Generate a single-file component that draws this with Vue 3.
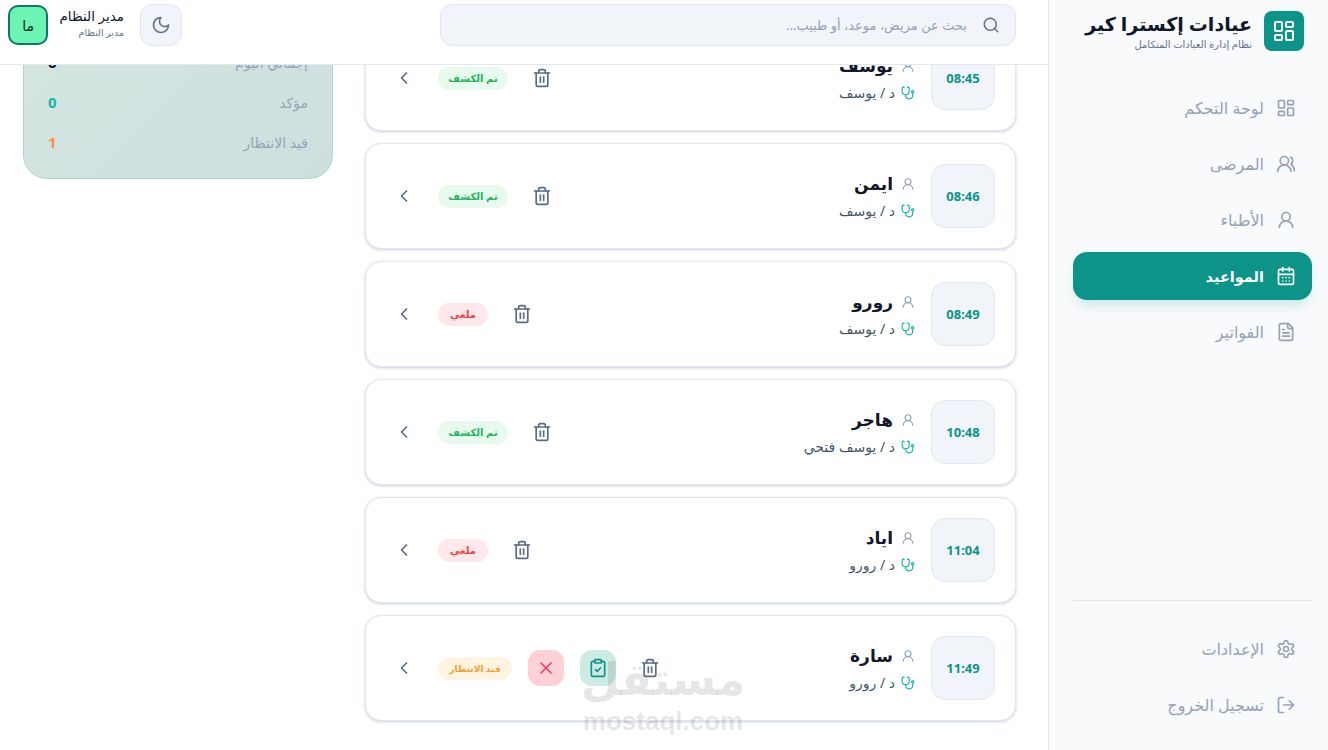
<script setup>
import { h } from "vue";

// lucide style icons, everything as paths
const icons = {
  dashboard: ["M4 3h5a1 1 0 0 1 1 1v7a1 1 0 0 1-1 1H4a1 1 0 0 1-1-1V4a1 1 0 0 1 1-1Z", "M15 3h5a1 1 0 0 1 1 1v3a1 1 0 0 1-1 1h-5a1 1 0 0 1-1-1V4a1 1 0 0 1 1-1Z", "M15 12h5a1 1 0 0 1 1 1v7a1 1 0 0 1-1 1h-5a1 1 0 0 1-1-1v-7a1 1 0 0 1 1-1Z", "M4 16h5a1 1 0 0 1 1 1v3a1 1 0 0 1-1 1H4a1 1 0 0 1-1-1v-3a1 1 0 0 1 1-1Z"],
  users: ["M18 21a8 8 0 0 0-16 0", "M15 8a5 5 0 1 1-10 0 5 5 0 0 1 10 0Z", "M22 20c0-3.37-2-6.5-4-8a5 5 0 0 0-.45-8.3"],
  user: ["M20 21a8 8 0 0 0-16 0", "M17 8a5 5 0 1 1-10 0 5 5 0 0 1 10 0Z"],
  calendar: ["M8 2v4", "M16 2v4", "M5 4h14a2 2 0 0 1 2 2v14a2 2 0 0 1-2 2H5a2 2 0 0 1-2-2V6a2 2 0 0 1 2-2Z", "M3 10h18", "M8 14h.01", "M12 14h.01", "M16 14h.01", "M8 18h.01", "M12 18h.01", "M16 18h.01"],
  file: ["M15 2H6a2 2 0 0 0-2 2v16a2 2 0 0 0 2 2h12a2 2 0 0 0 2-2V7Z", "M14 2v4a2 2 0 0 0 2 2h4", "M10 9H8", "M16 13H8", "M16 17H8"],
  settings: ["M12.22 2h-.44a2 2 0 0 0-2 2v.18a2 2 0 0 1-1 1.73l-.43.25a2 2 0 0 1-2 0l-.15-.08a2 2 0 0 0-2.73.73l-.22.38a2 2 0 0 0 .73 2.73l.15.1a2 2 0 0 1 1 1.72v.51a2 2 0 0 1-1 1.74l-.15.09a2 2 0 0 0-.73 2.73l.22.38a2 2 0 0 0 2.73.73l.15-.08a2 2 0 0 1 2 0l.43.25a2 2 0 0 1 1 1.73V20a2 2 0 0 0 2 2h.44a2 2 0 0 0 2-2v-.18a2 2 0 0 1 1-1.73l.43-.25a2 2 0 0 1 2 0l.15.08a2 2 0 0 0 2.73-.73l.22-.39a2 2 0 0 0-.73-2.73l-.15-.08a2 2 0 0 1-1-1.74v-.5a2 2 0 0 1 1-1.74l.15-.09a2 2 0 0 0 .73-2.73l-.22-.38a2 2 0 0 0-2.73-.73l-.15.08a2 2 0 0 1-2 0l-.43-.25a2 2 0 0 1-1-1.73V4a2 2 0 0 0-2-2Z", "M15 12a3 3 0 1 1-6 0 3 3 0 0 1 6 0Z"],
  logout: ["M9 21H5a2 2 0 0 1-2-2V5a2 2 0 0 1 2-2h4", "m16 17 5-5-5-5", "M21 12H9"],
  moon: ["M12 3a6 6 0 0 0 9 9 9 9 0 1 1-9-9Z"],
  search: ["M19 11a8 8 0 1 1-16 0 8 8 0 0 1 16 0Z", "m21 21-4.3-4.3"],
  trash: ["M3 6h18", "M19 6v14c0 1-1 2-2 2H7c-1 0-2-1-2-2V6", "M8 6V4c0-1 1-2 2-2h4c1 0 2 1 2 2v2", "M10 11v6", "M14 11v6"],
  chevron: ["m15 18-6-6 6-6"],
  x: ["M18 6 6 18", "m6 6 12 12"],
  clipboard: ["M9 2h6a1 1 0 0 1 1 1v2a1 1 0 0 1-1 1H9a1 1 0 0 1-1-1V3a1 1 0 0 1 1-1Z", "M16 4h2a2 2 0 0 1 2 2v14a2 2 0 0 1-2 2H6a2 2 0 0 1-2-2V6a2 2 0 0 1 2-2h2", "m9 14 2 2 4-4"],
  stethoscope: ["M4.8 2.3A.3.3 0 1 0 5 2H4a2 2 0 0 0-2 2v5a6 6 0 0 0 6 6 6 6 0 0 0 6-6V4a2 2 0 0 0-2-2h-1a.2.2 0 1 0 .3.3", "M8 15v1a6 6 0 0 0 6 6 6 6 0 0 0 6-6v-4", "M22 10a2 2 0 1 1-4 0 2 2 0 0 1 4 0Z"],
};

const Icon = (props) =>
  h(
    "svg",
    {
      width: props.size || 20,
      height: props.size || 20,
      viewBox: "0 0 24 24",
      fill: "none",
      stroke: "currentColor",
      "stroke-width": props.sw || 2,
      "stroke-linecap": "round",
      "stroke-linejoin": "round",
    },
    icons[props.name].map((d) => h("path", { d }))
  );
Icon.props = ["name", "size", "sw"];

const navTop = [
  { label: "لوحة التحكم", icon: "dashboard" },
  { label: "المرضى", icon: "users" },
  { label: "الأطباء", icon: "user" },
  { label: "المواعيد", icon: "calendar", active: true },
  { label: "الفواتير", icon: "file" },
];
const navBottom = [
  { label: "الإعدادات", icon: "settings" },
  { label: "تسجيل الخروج", icon: "logout" },
];

const statusText = { done: "تم الكشف", cancelled: "ملغي", waiting: "قيد الانتظار" };

const appointments = [
  { time: "08:45", name: "يوسف", doctor: "د / يوسف", status: "done" },
  { time: "08:46", name: "ايمن", doctor: "د / يوسف", status: "done" },
  { time: "08:49", name: "رورو", doctor: "د / يوسف", status: "cancelled" },
  { time: "10:48", name: "هاجر", doctor: "د / يوسف فتحي", status: "done" },
  { time: "11:04", name: "اياد", doctor: "د / رورو", status: "cancelled" },
  { time: "11:49", name: "سارة", doctor: "د / رورو", status: "waiting" },
];

const stats = [
  { label: "إجمالي اليوم", value: 6, cls: "dark" },
  { label: "مؤكد", value: 0, cls: "teal" },
  { label: "قيد الانتظار", value: 1, cls: "orange" },
];
</script>

<template>
  <div class="app" dir="rtl">
    <aside class="sidebar">
      <div class="brand">
        <div class="logo"><Icon name="dashboard" :size="24" /></div>
        <div>
          <div class="brand-title">عيادات إكسترا كير</div>
          <div class="brand-sub">نظام إدارة العيادات المتكامل</div>
        </div>
      </div>
      <nav class="nav">
        <a v-for="item in navTop" :key="item.label" class="nav-item" :class="{ active: item.active }">
          <Icon :name="item.icon" />
          <span>{{ item.label }}</span>
        </a>
      </nav>
      <nav class="nav nav-bottom">
        <a v-for="item in navBottom" :key="item.label" class="nav-item">
          <Icon :name="item.icon" />
          <span>{{ item.label }}</span>
        </a>
      </nav>
    </aside>

    <main class="main">
      <header class="topbar">
        <div class="search">
          <Icon name="search" :size="18" class="search-icon" />
          <span>بحث عن مريض، موعد، أو طبيب...</span>
        </div>
        <div class="top-left">
          <button class="theme-btn"><Icon name="moon" /></button>
          <div class="who">
            <div class="who-name">مدير النظام</div>
            <div class="who-role">مدير النظام</div>
          </div>
          <div class="avatar">ما</div>
        </div>
      </header>

      <!-- the page is scrolled down a bit in the shot -->
      <div class="content">
        <section class="list">
          <article v-for="a in appointments" :key="a.time" class="card">
            <div class="time">{{ a.time }}</div>
            <div class="info">
              <div class="patient">
                <Icon name="user" :size="14" class="patient-icon" />
                <span>{{ a.name }}</span>
              </div>
              <div class="doctor">
                <Icon name="stethoscope" :size="14" class="doctor-icon" />
                <span>{{ a.doctor }}</span>
              </div>
            </div>
            <div class="actions">
              <button class="icon-btn"><Icon name="trash" /></button>
              <template v-if="a.status === 'waiting'">
                <button class="icon-btn confirm"><Icon name="clipboard" /></button>
                <button class="icon-btn cancel"><Icon name="x" /></button>
              </template>
              <span class="badge" :class="a.status">{{ statusText[a.status] }}</span>
              <button class="icon-btn"><Icon name="chevron" /></button>
            </div>
          </article>
        </section>

        <aside class="summary">
          <div v-for="s in stats" :key="s.label" class="stat">
            <span class="stat-label">{{ s.label }}</span>
            <span class="stat-value" :class="s.cls">{{ s.value }}</span>
          </div>
        </aside>
      </div>
    </main>

    <div class="watermark">
      <div class="wm-ar">مستقل</div>
      <div class="wm-en">mostaql.com</div>
    </div>
  </div>
</template>

<style scoped>
.app {
  display: flex;
  position: relative;
  width: 1328px;
  height: 750px;
  overflow: hidden;
  background: #fff;
  color: #0f172a;
  font-family: "Noto Sans", "DejaVu Sans", sans-serif;
}

.sidebar {
  width: 280px;
  flex: none;
  box-sizing: border-box;
  display: flex;
  flex-direction: column;
  padding: 11px 16px 21px 24px;
  background: #f8fafc;
  border-left: 1px solid #e2e8f0;
}
.brand {
  display: flex;
  gap: 12px;
  padding: 0 8px;
  height: 40px;
}
.logo {
  width: 40px;
  height: 40px;
  flex: none;
  display: flex;
  align-items: center;
  justify-content: center;
  border-radius: 8px;
  background: #0d9488;
  color: #fff;
}
.brand-title {
  font-size: 19px;
  line-height: 26px;
  font-weight: 700;
  white-space: nowrap;
}
.brand-sub {
  font-size: 10px;
  line-height: 14px;
  color: #64748b;
  white-space: nowrap;
}
.nav {
  display: flex;
  flex-direction: column;
  gap: 8px;
  margin-top: 33px;
}
.nav-bottom {
  margin-top: auto;
  padding-top: 24px;
  border-top: 1px solid #e2e8f0;
}
.nav-item {
  display: flex;
  align-items: center;
  gap: 12px;
  height: 48px;
  padding: 0 16px;
  border-radius: 14px;
  font-size: 16px;
  color: #94a3b8;
}
.nav-item.active {
  background: #0d9488;
  color: #fff;
  font-size: 14.5px;
  font-weight: 700;
  box-shadow: 0 8px 12px -4px rgba(13, 148, 136, 0.22);
}

.main {
  flex: 1;
  min-width: 0;
  display: flex;
  flex-direction: column;
}
.topbar {
  position: relative;
  z-index: 2;
  height: 65px;
  flex: none;
  box-sizing: border-box;
  display: flex;
  justify-content: space-between;
  padding: 4px 32px 0 8px;
  background: #fff;
  border-bottom: 1px solid #e2e8f0;
}
.search {
  width: 576px;
  height: 42px;
  box-sizing: border-box;
  display: flex;
  align-items: center;
  gap: 15px;
  padding: 0 15px;
  background: #f1f5f9;
  border: 1px solid #e2e8f0;
  border-radius: 12px;
  font-size: 13px;
  color: #94a3b8;
}
.search-icon {
  color: #64748b;
}
.top-left {
  display: flex;
  gap: 16px;
  align-items: flex-start;
}
.theme-btn {
  width: 42px;
  height: 42px;
  padding: 0;
  display: flex;
  align-items: center;
  justify-content: center;
  background: #f1f5f9;
  border: 1px solid #e2e8f0;
  border-radius: 12px;
  color: #64748b;
}
.who {
  width: 64px;
  margin-left: -4px;
  text-align: right;
  padding-top: 2px;
}
.who-name {
  font-size: 13.5px;
  line-height: 20px;
  white-space: nowrap;
}
.who-role {
  font-size: 9.5px;
  line-height: 14px;
  color: #64748b;
  white-space: nowrap;
}
.avatar {
  width: 40px;
  height: 40px;
  margin-top: 1px;
  box-sizing: border-box;
  display: flex;
  align-items: center;
  justify-content: center;
  border: 2px solid #0f766e;
  border-radius: 10px;
  background: #6cf5b2;
  font-size: 14px;
}

.content {
  display: flex;
  align-items: flex-start;
  gap: 32px;
  margin-top: -40px;
  padding: 0 32px 0 23px;
}
.list {
  width: 651px;
  flex: none;
  display: flex;
  flex-direction: column;
  gap: 12px;
}
.card {
  display: flex;
  align-items: center;
  gap: 16px;
  height: 106px;
  box-sizing: border-box;
  padding: 0 20px;
  background: #fff;
  border: 1px solid #e2e8f0;
  border-radius: 16px;
  box-shadow: 0 1px 3px rgba(100, 116, 139, 0.35);
}
.time {
  width: 64px;
  height: 64px;
  flex: none;
  box-sizing: border-box;
  display: flex;
  align-items: center;
  justify-content: center;
  background: #f1f5f9;
  border: 1px solid #e2e8f0;
  border-radius: 14px;
  font-size: 13px;
  font-weight: 700;
  color: #0d9488;
}
.info {
  flex: 1;
  display: flex;
  flex-direction: column;
  gap: 6px;
}
.patient {
  display: flex;
  align-items: center;
  gap: 8px;
  font-size: 17px;
  line-height: 24px;
  font-weight: 700;
}
.patient-icon {
  color: #94a3b8;
}
.doctor {
  display: flex;
  align-items: center;
  gap: 6px;
  font-size: 14px;
  line-height: 18px;
  color: #475569;
}
.doctor-icon {
  color: #14b8a6;
}
.actions {
  display: flex;
  align-items: center;
  gap: 16px;
}
.icon-btn {
  width: 36px;
  height: 36px;
  padding: 0;
  display: flex;
  align-items: center;
  justify-content: center;
  background: none;
  border: 0;
  border-radius: 12px;
  color: #5b6b85;
}
.icon-btn.confirm {
  background: #cdeae5;
  color: #0d9488;
}
.icon-btn.cancel {
  background: #ffd0d5;
  color: #f43f5e;
}
.badge {
  height: 23px;
  display: flex;
  align-items: center;
  justify-content: center;
  border-radius: 12px;
  font-size: 10px;
  font-weight: 700;
  white-space: nowrap;
}
.badge.done {
  width: 70px;
  background: #e8f9ee;
  color: #22b45e;
}
.badge.cancelled {
  width: 50px;
  background: #ffe8ea;
  color: #ef4444;
}
.badge.waiting {
  width: 74px;
  font-size: 9px;
  background: #fff4e2;
  color: #f59e2b;
}

.summary {
  width: 310px;
  flex: none;
  box-sizing: border-box;
  padding: 16px 24px 16px;
  background: linear-gradient(135deg, #d3e4e1, #cfdfdd);
  border: 1px solid #a9d8d0;
  border-radius: 24px;
}
.stat {
  display: flex;
  align-items: center;
  justify-content: space-between;
  height: 40px;
}
.stat-label {
  font-size: 14px;
  color: #94a3b8;
}
.stat-value {
  font-size: 15px;
  font-weight: 700;
}
.stat-value.dark {
  color: #0f172a;
}
.stat-value.teal {
  color: #14b8a6;
}
.stat-value.orange {
  color: #fb923c;
}

/* site watermark lying over the screenshot */
.watermark {
  position: absolute;
  left: 573px;
  top: 650px;
  width: 180px;
  text-align: center;
  color: rgba(60, 60, 60, 0.13);
  pointer-events: none;
}
.wm-ar {
  font-size: 45px;
  line-height: 56px;
  font-weight: 700;
}
.wm-en {
  font-family: "Liberation Sans", sans-serif;
  font-size: 26px;
  line-height: 30px;
  font-weight: 700;
}
</style>

<style>
html,
body {
  margin: 0;
  overflow: hidden;
}
</style>
